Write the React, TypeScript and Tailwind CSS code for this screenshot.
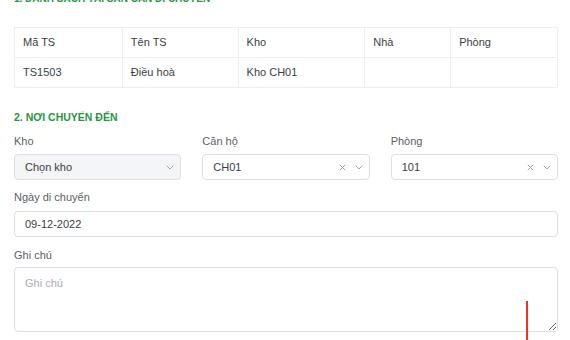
import type { ReactNode } from 'react'

const columns = [
  { label: 'Mã TS', width: 'w-[108px]' },
  { label: 'Tên TS', width: 'w-[116px]' },
  { label: 'Kho', width: 'w-[127px]' },
  { label: 'Nhà', width: 'w-[86px]' },
  { label: 'Phòng', width: 'w-[107px]' },
]

const rows = [['TS1503', 'Điều hoà', 'Kho CH01', '', '']]

function Chevron() {
  return (
    <svg width="8" height="5" viewBox="0 0 8 5" className="text-[#a0a4ab]">
      <path d="M1 1 4 4 7 1" fill="none" stroke="currentColor" strokeWidth="1" strokeLinecap="round" />
    </svg>
  )
}

function Cross() {
  return (
    <svg width="7" height="7" viewBox="0 0 7 7" className="text-[#9ea2a8]">
      <path d="M1 1 6 6M6 1 1 6" fill="none" stroke="currentColor" strokeWidth="1" strokeLinecap="round" />
    </svg>
  )
}

function Label({ children, className = '' }: { children: ReactNode; className?: string }) {
  return <div className={`h-[16px] text-[11px] leading-[16px] text-[#5c6066] ${className}`}>{children}</div>
}

function Select({ value, disabled, clearable }: { value: string; disabled?: boolean; clearable?: boolean }) {
  return (
    <div
      className={`flex h-[26px] items-center rounded-[4px] border border-[#dcdfe5] pl-[10px] pr-[6px] text-[11px] text-[#3a3e44] ${
        disabled ? 'bg-[#f4f5f7]' : 'bg-white'
      }`}
    >
      <span className="flex-1 truncate">{value}</span>
      {clearable && (
        <span className="mr-[9px] flex items-center">
          <Cross />
        </span>
      )}
      <Chevron />
    </div>
  )
}

export default function App() {
  return (
    <div className="relative h-[340px] w-[570px] overflow-hidden bg-white pl-[14px] pr-[12px] font-['Liberation_Sans',Arial,sans-serif]">
      <h2 className="mt-[-9px] h-[16px] text-[10px] font-bold uppercase leading-[16px] text-[#26963f]">
        1. Danh sách tài sản cần di chuyển
      </h2>

      <table className="mt-[20px] w-[544px] border-collapse text-[11px] text-[#3a3e44]">
        <thead>
          <tr className="h-[30px]">
            {columns.map((c) => (
              <th key={c.label} className={`${c.width} border border-[#eceef2] px-[8px] text-left font-normal`}>
                {c.label}
              </th>
            ))}
          </tr>
        </thead>
        <tbody>
          {rows.map((r) => (
            <tr key={r[0]} className="h-[30px]">
              {r.map((cell, i) => (
                <td key={i} className="border border-[#eceef2] px-[8px]">
                  {cell}
                </td>
              ))}
            </tr>
          ))}
        </tbody>
      </table>

      <h2 className="mt-[21px] h-[16px] text-[10.5px] font-bold uppercase leading-[16px] text-[#26963f]">
        2. Nơi chuyển đến
      </h2>

      <div className="mt-[8px] grid w-[544px] grid-cols-3 gap-x-[21px]">
        <div>
          <Label className="mb-[5px]">Kho</Label>
          <Select value="Chọn kho" disabled />
        </div>
        <div>
          <Label className="mb-[5px]">Căn hộ</Label>
          <Select value="CH01" clearable />
        </div>
        <div>
          <Label className="mb-[5px]">Phòng</Label>
          <Select value="101" clearable />
        </div>
      </div>

      <Label className="mt-[9px] mb-[6px]">Ngày di chuyển</Label>
      <div className="flex h-[26px] w-[544px] items-center rounded-[4px] border border-[#dcdfe5] px-[10px] text-[11px] text-[#3a3e44]">
        09-12-2022
      </div>

      <Label className="mt-[10px] mb-[4px]">Ghi chú</Label>
      <textarea
        placeholder="Ghi chú"
        className="block h-[65px] w-[544px] resize-y rounded-[4px] border border-[#dcdfe5] px-[10px] py-[7px] text-[11px] text-[#3a3e44] outline-none placeholder:text-[#a9adb3]"
      />

      <div className="absolute left-[526px] top-[301px] h-[40px] w-[2px] bg-[#f0321e]" />
    </div>
  )
}
